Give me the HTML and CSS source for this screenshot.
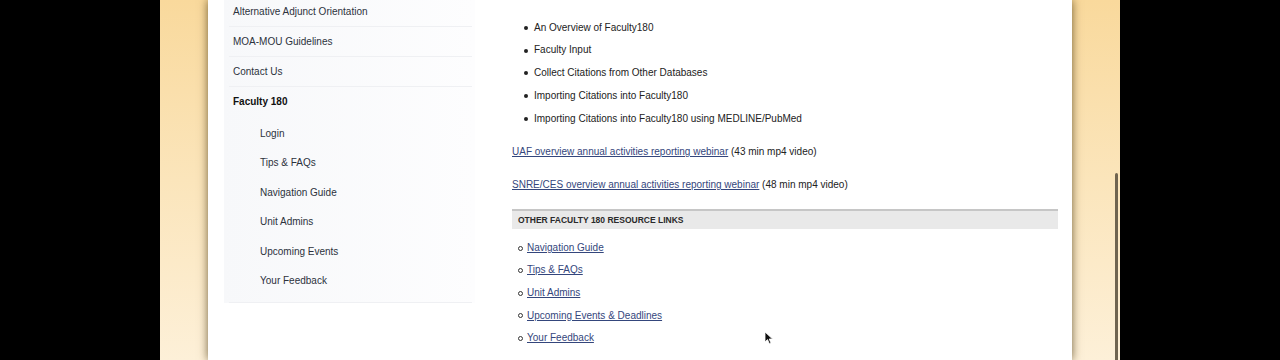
FILE: index.html
```html
<!DOCTYPE html>
<html lang="en">
<head>
    <meta charset="UTF-8">
    <meta name="viewport" content="width=device-width, initial-scale=1.0">
    <title>Faculty 180</title>
    <link rel="stylesheet" href="styles.css">
</head>
<body>

    <div class="screen">
        <div class="edge"></div>

        <div class="gutter left-gutter"></div>

        <div class="page">
            <!-- Left navigation -->
            <nav class="sidebar">
                <ul class="nav">
                    <li class="nav-item first"><a href="#">Alternative Adjunct Orientation</a></li>
                    <li class="nav-item"><a href="#">MOA-MOU Guidelines</a></li>
                    <li class="nav-item"><a href="#">Contact Us</a></li>
                    <li class="nav-item current">
                        <a href="#">Faculty 180</a>
                        <ul class="subnav">
                            <li><a href="#">Login</a></li>
                            <li><a href="#">Tips &amp; FAQs</a></li>
                            <li><a href="#">Navigation Guide</a></li>
                            <li><a href="#">Unit Admins</a></li>
                            <li><a href="#">Upcoming Events</a></li>
                            <li><a href="#">Your Feedback</a></li>
                        </ul>
                    </li>
                </ul>
            </nav>

            <!-- Main content -->
            <main class="content">
                <p class="cut-line">Faculty and unit administrators can watch short training videos on the following topics in our Faculty180 video library page:</p>

                <ul class="topics">
                    <li>An Overview of Faculty180</li>
                    <li>Faculty Input</li>
                    <li>Collect Citations from Other Databases</li>
                    <li>Importing Citations into Faculty180</li>
                    <li>Importing Citations into Faculty180 using MEDLINE/PubMed</li>
                </ul>

                <p class="video"><a href="#">UAF overview annual activities reporting webinar</a> (43 min mp4 video)</p>
                <p class="video"><a href="#">SNRE/CES overview annual activities reporting webinar</a> (48 min mp4 video)</p>

                <h3 class="box-title">Other Faculty 180 Resource Links</h3>
                <ul class="resources">
                    <li><a href="#">Navigation Guide</a></li>
                    <li><a href="#">Tips &amp; FAQs</a></li>
                    <li><a href="#">Unit Admins</a></li>
                    <li><a href="#">Upcoming Events &amp; Deadlines</a></li>
                    <li><a href="#">Your Feedback</a></li>
                </ul>
            </main>
        </div>

        <div class="gutter right-gutter">
            <div class="scroll-thumb"></div>
        </div>

        <div class="edge"></div>

        <!-- mouse pointer -->
        <svg class="pointer" width="10" height="14" viewBox="0 0 10 14">
            <path d="M1 1 L1 11 L3.5 8.6 L5.4 12.8 L7 12 L5.2 8 L8.6 8 Z" fill="#111" stroke="#fff" stroke-width="0.8"/>
        </svg>
    </div>

</body>
</html>
```

FILE: styles.css
```css
html, body {
    margin: 0;
    height: 100%;
    background-color: #000;
    overflow: hidden;
}

.screen {
    position: relative;
    display: flex;
    height: 360px;
    font-family: "Liberation Sans", Arial, Helvetica, sans-serif;
    font-size: 10px;
    color: #222;
}

.edge {
    width: 160px;
    flex-shrink: 0;
    background-color: #000;
}

.gutter {
    width: 48px;
    flex-shrink: 0;
    background: linear-gradient(to bottom, #f9d99c 0%, #fbe5bb 50%, #fdf0d8 100%);
}

.right-gutter {
    display: flex;
    justify-content: flex-end;
    padding-right: 2px;
    box-sizing: border-box;
}

.scroll-thumb {
    width: 3px;
    margin-top: 173px;
    height: 200px;
    border-radius: 2px;
    background-color: #6f6450;
}

.page {
    width: 864px;
    flex-shrink: 0;
    display: flex;
    background-color: #fff;
    box-shadow: 0 0 9px rgba(70, 50, 10, 0.75);
    position: relative;
    z-index: 1;
    padding-left: 16px;
    box-sizing: border-box;
}

a {
    color: #34467c;
}

/* Sidebar */
.sidebar {
    width: 251px;
    flex-shrink: 0;
    align-self: flex-start;
    background: linear-gradient(to right, #f7f8fa, #fdfdfe);
}

.nav,
.subnav {
    list-style: none;
    margin: 0;
    padding: 0;
}

.nav-item {
    border-bottom: 1px solid #eff0f3;
    margin: 0 3px 0 5px;
}

.nav-item > a {
    display: block;
    line-height: 29px;
    padding-left: 4px;
    color: #2c323c;
    text-decoration: none;
}

.nav-item.first {
    margin-top: -3px;
}

.nav-item.current > a {
    font-weight: bold;
    color: #111;
}

.subnav {
    padding: 3px 0 7px 31px;
}

.subnav a {
    display: block;
    line-height: 29.4px;
    color: #2c323c;
    text-decoration: none;
}

/* Main column */
.content {
    width: 546px;
    margin-left: 37px;
}

.cut-line {
    margin: -12px 0 0;
    line-height: 14px;
    white-space: nowrap;
    overflow: hidden;
}

.topics {
    list-style: none;
    margin: 14.6px 0 0;
    padding: 0 0 0 12px;
}

.topics li {
    display: flex;
    align-items: center;
    line-height: 22.75px;
}

.topics li::before {
    content: "";
    width: 4px;
    height: 4px;
    border-radius: 50%;
    background-color: #222;
    margin-right: 6px;
}

.video {
    margin: 11px 0 0;
    line-height: 22px;
}

.box-title {
    margin: 13px 0 0;
    border-top: 2px solid #c6c6c6;
    background-color: #e9e9e9;
    line-height: 18px;
    padding-left: 6px;
    font-size: 8.5px;
    font-weight: bold;
    text-transform: uppercase;
    color: #2a2a2a;
}

.resources {
    list-style: none;
    margin: 7.5px 0 0;
    padding: 0 0 0 6px;
}

.resources li {
    display: flex;
    align-items: center;
    line-height: 22.6px;
}

.resources li::before {
    content: "";
    width: 3px;
    height: 3px;
    border: 1px solid #333;
    border-radius: 50%;
    margin-right: 4px;
}

.pointer {
    position: absolute;
    left: 764px;
    top: 331px;
    z-index: 2;
}
```
